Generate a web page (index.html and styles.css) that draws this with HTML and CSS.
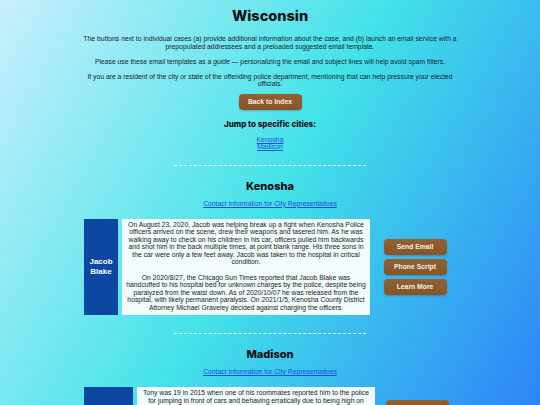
FILE: index.html
```html
<!DOCTYPE html>
<html lang="en">
<head>
<meta charset="utf-8">
<title>Wisconsin</title>
<link rel="stylesheet" href="styles.css">
</head>
<body>
<main class="page">
  <h1 class="title">Wisconsin</h1>
  <p class="intro intro-first">The buttons next to individual cases (a) provide additional information about the case, and (b) launch an email service with a prepopulated addressees and a preloaded suggested email template.</p>
  <p class="intro">Please use these email templates as a <em>guide</em> — personalizing the email and subject lines will help avoid spam filters.</p>
  <p class="intro">If you are a resident of the city or state of the offending police department, mentioning that can help pressure your elected officials.</p>
  <a class="btn btn-index" href="#">Back to Index</a>
  <h2 class="jump-title">Jump to specific cities:</h2>
  <nav class="jump-links">
    <a href="#kenosha">Kenosha</a>
    <a href="#madison">Madison</a>
  </nav>

  <section class="city" id="kenosha">
    <hr class="divider">
    <h2 class="city-title">Kenosha</h2>
    <a class="contact" href="#">Contact Information for City Representatives</a>
    <div class="case case-blake">
      <div class="case-name">Jacob<br>Blake</div>
      <div class="case-text">
        <p>On August 23, 2020, Jacob was helping break up a fight when Kenosha Police officers arrived on the scene, drew their weapons and tasered him. As he was walking away to check on his children in his car, officers pulled him backwards and shot him in the back multiple times, at point blank range. His three sons in the car were only a few feet away. Jacob was taken to the hospital in critical condition.</p>
        <p>On 2020/8/27, the Chicago Sun Times reported that Jacob Blake was handcuffed to his hospital bed for unknown charges by the police, despite being paralyzed from the waist down. As of 2020/10/07 he was released from the hospital, with likely permanent paralysis. On 2021/1/5, Kenosha County District Attorney Michael Graveley decided against charging the officers.</p>
      </div>
      <div class="case-actions">
        <a class="btn" href="#">Send Email</a>
        <a class="btn" href="#">Phone Script</a>
        <a class="btn" href="#">Learn More</a>
      </div>
    </div>
  </section>

  <section class="city" id="madison">
    <hr class="divider">
    <h2 class="city-title">Madison</h2>
    <a class="contact" href="#">Contact Information for City Representatives</a>
    <div class="case case-robinson">
      <div class="case-name">Tony<br>Robinson</div>
      <div class="case-text">
        <p>Tony was 19 in 2015 when one of his roommates reported him to the police for jumping in front of cars and behaving erratically due to being high on mushrooms. Officer Matt Kenny responded to the call, forced his way into the apartment house without waiting for backup, and shot Tony seven times in three seconds. Tony was unarmed and died at the scene.</p>
        <p>Kenny had previously been involved in the fatal shooting of another man in 2007. On 2015/5/12, Dane County District Attorney Ismael Ozanne announced that Kenny would not be charged. In 2017 the City of Madison agreed to pay a $3.35 million settlement to Tony's family.</p>
      </div>
      <div class="case-actions">
        <a class="btn" href="#">Send Email</a>
        <a class="btn" href="#">Phone Script</a>
        <a class="btn" href="#">Learn More</a>
      </div>
    </div>
  </section>
</main>
</body>
</html>
```
FILE: styles.css
```css
html {
  min-height: 100%;
  background: linear-gradient(120deg, #c9effd 0%, #43e3e8 50%, #2d84f6 100%) fixed;
}

body {
  margin: 0;
  font-family: "Liberation Sans", Arial, sans-serif;
  font-size: 6.8px;
  line-height: 7.5px;
  color: #1c2330;
}

.page {
  width: 372px;
  margin: 0 auto;
  padding-top: 7px;
  display: flex;
  flex-direction: column;
  align-items: center;
  text-align: center;
}

.title {
  margin: 0;
  font-family: Inter, "DejaVu Sans", sans-serif;
  font-weight: 800;
  font-size: 14.5px;
  line-height: 18px;
  color: #0b0f14;
}

.intro {
  width: 380px;
  margin: 7.5px 0 0;
}

.intro-first {
  margin-top: 10px;
}

a {
  color: #1a4fe0;
}

.btn {
  display: flex;
  align-items: center;
  justify-content: center;
  width: 63px;
  height: 16px;
  box-sizing: border-box;
  border-radius: 4px;
  background: linear-gradient(#94612f, #84552a);
  box-shadow: 0 1px 2px rgba(40, 30, 20, 0.25);
  color: #f6efe4;
  font-weight: 700;
  font-size: 6.8px;
  text-decoration: none;
}

.btn-index {
  margin-top: 6px;
}

.jump-title {
  margin: 9px 0 0;
  font-family: Inter, "DejaVu Sans", sans-serif;
  font-weight: 800;
  font-size: 8px;
  line-height: 10px;
  color: #0b0f14;
}

.jump-links {
  margin-top: 7px;
  display: flex;
  flex-direction: column;
  align-items: center;
  line-height: 7.6px;
}

.city {
  width: 100%;
  display: flex;
  flex-direction: column;
  align-items: center;
}

.divider {
  width: 192px;
  margin: 14px 0 0;
  border: 0;
  border-top: 1px dashed #ffffff;
  height: 0;
}

#madison .divider {
  margin-top: 18px;
}

.city-title {
  margin: 13px 0 0;
  font-family: Inter, "DejaVu Sans", sans-serif;
  font-weight: 800;
  font-size: 11px;
  line-height: 14px;
  color: #0b0f14;
}

.contact {
  margin-top: 7px;
}

.case {
  margin-top: 11.5px;
  width: 100%;
  display: grid;
  gap: 4px;
  align-items: stretch;
}

.case-blake {
  grid-template-columns: 34px 248px 1fr;
}

.case-robinson {
  grid-template-columns: 49px 238px 1fr;
}

.case-name {
  display: flex;
  align-items: center;
  justify-content: center;
  background: #0d47a1;
  color: #ffffff;
  font-weight: 700;
  font-size: 8px;
  line-height: 9.5px;
}

.case-text {
  background: #f2fbfe;
  padding: 2px 4px 4px;
  color: #1c1c1c;
}

.case-text p {
  margin: 0;
}

.case-text p + p {
  margin-top: 8px;
}

.case-actions {
  display: flex;
  flex-direction: column;
  align-items: center;
  justify-content: center;
  gap: 4px;
}
```
